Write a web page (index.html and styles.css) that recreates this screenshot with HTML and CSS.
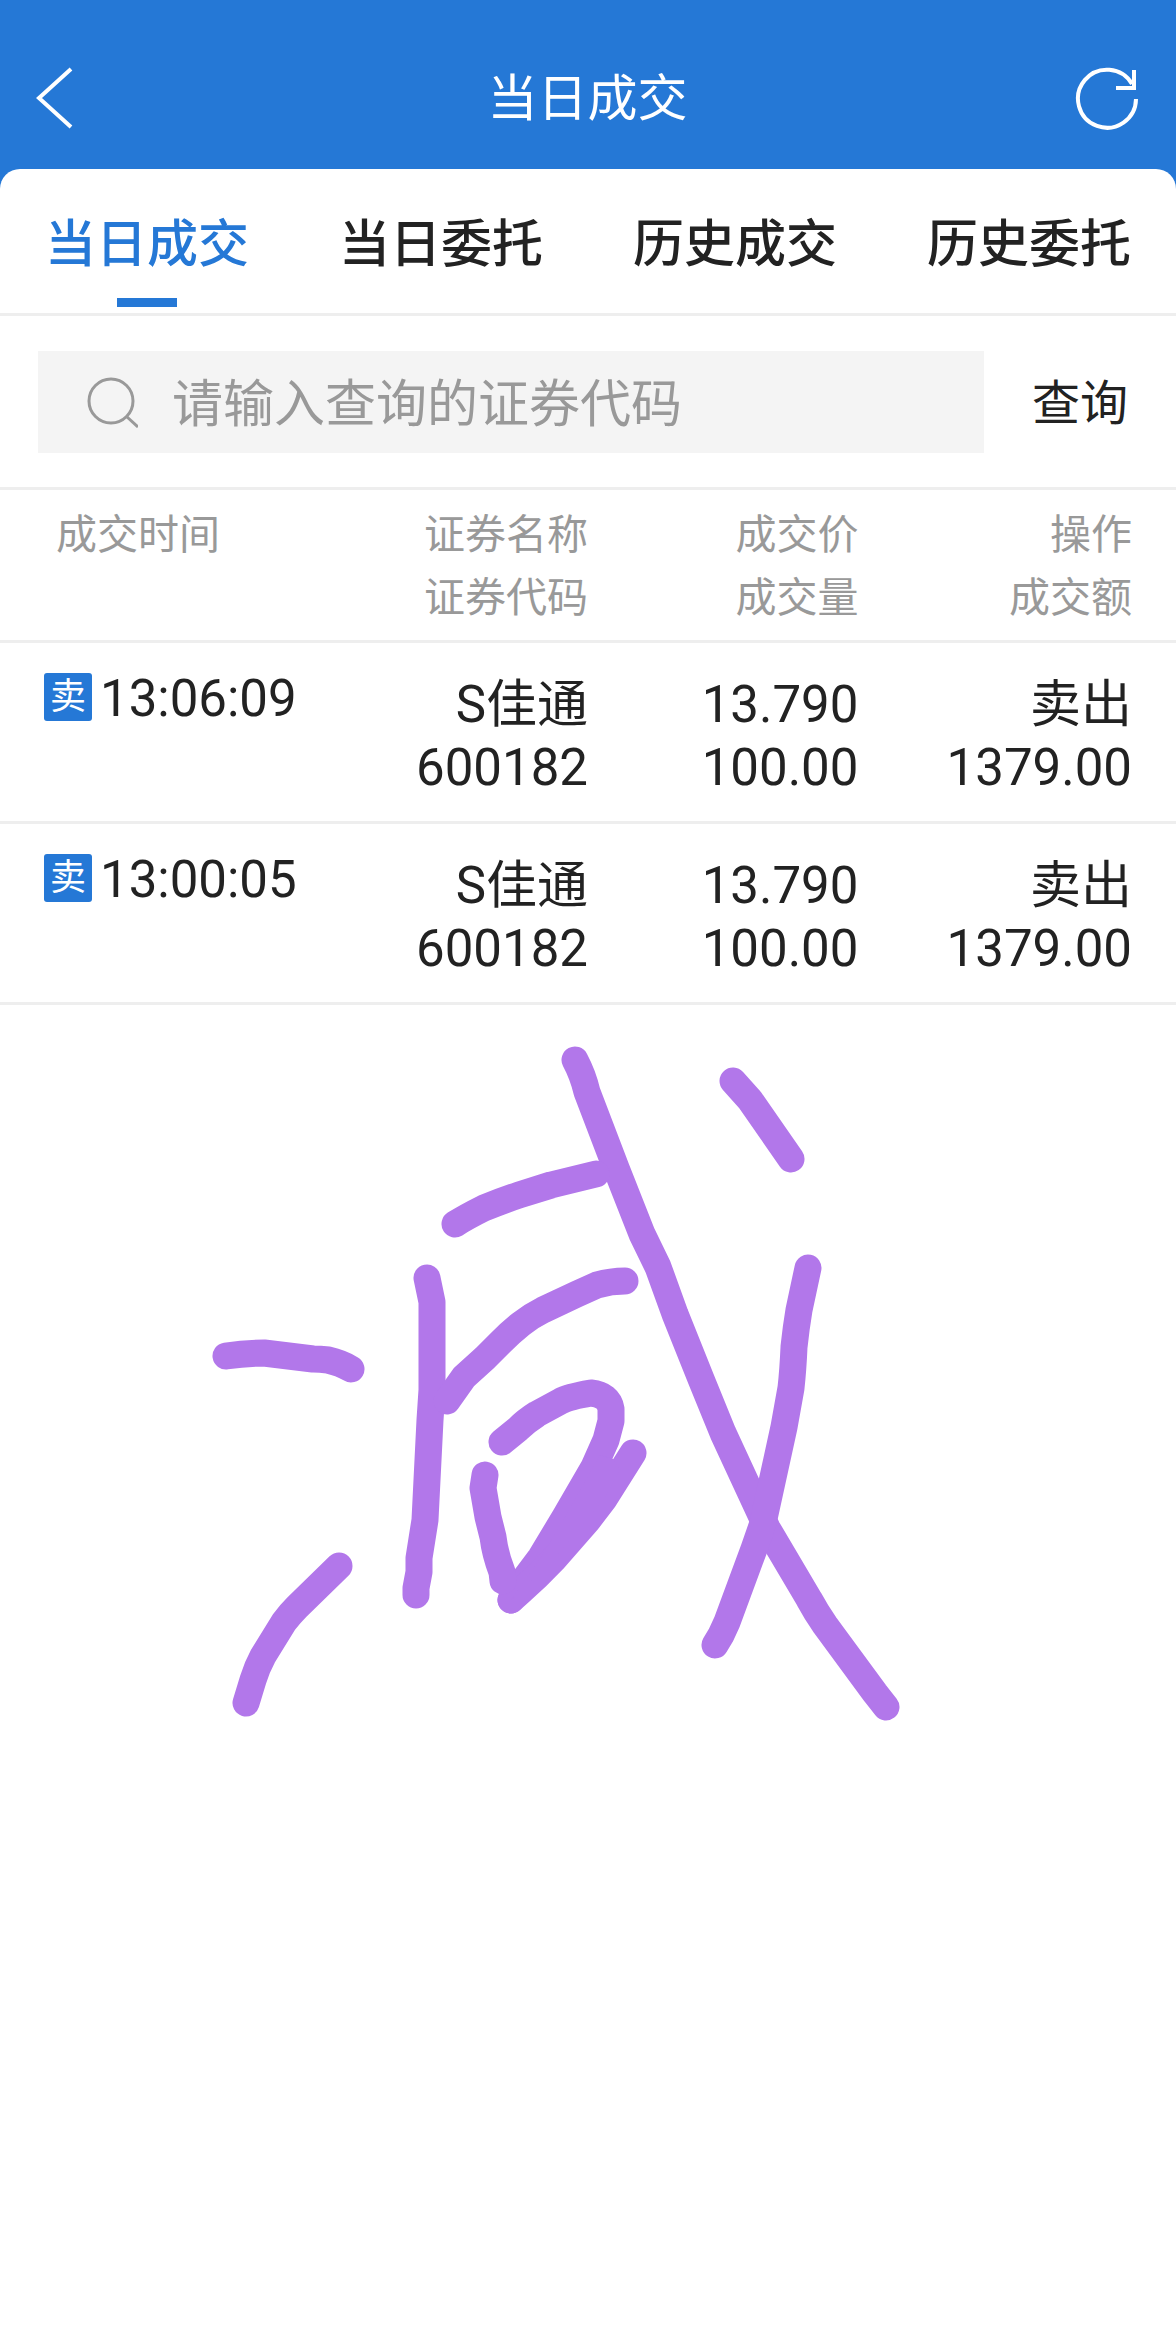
FILE: index.html
```html
<!DOCTYPE html>
<html lang="zh-CN">
<head>
  <meta charset="utf-8">
  <meta name="viewport" content="width=device-width, initial-scale=1">
  <title>当日成交</title>
  <link rel="stylesheet" href="styles.css">
</head>
<body>
  <div class="app">
    <header class="topbar">
      <button class="icon-button" type="button" aria-label="返回">
        <svg width="38" height="64" viewBox="0 0 38 64" fill="none" stroke="currentColor" stroke-width="4"><path d="M35 3 3 32l32 29"/></svg>
      </button>
      <h1 class="title">当日成交</h1>
      <button class="icon-button icon-button-end" type="button" aria-label="刷新">
        <svg width="64" height="64" viewBox="0 0 64 64" fill="none" stroke="currentColor" stroke-width="4"><path d="M61 33A29 29 0 1 1 57 18"/><path d="M59 4v18H41"/></svg>
      </button>
    </header>

    <main class="sheet">
      <nav class="tabs">
        <a class="tab tab-active" href="#today-deals" aria-current="page">当日成交</a>
        <a class="tab" href="#today-orders">当日委托</a>
        <a class="tab" href="#past-deals">历史成交</a>
        <a class="tab" href="#past-orders">历史委托</a>
      </nav>

      <form class="search">
        <label class="search-box">
          <svg class="search-icon" width="52" height="52" viewBox="0 0 52 52" fill="none" stroke="currentColor" stroke-width="3"><circle cx="25" cy="25" r="22"/><path d="m40 40 12 11"/></svg>
          <input class="search-input" type="text" placeholder="请输入查询的证券代码" aria-label="证券代码">
        </label>
        <button class="search-button" type="submit">查询</button>
      </form>

      <table class="deals">
        <colgroup>
          <col class="col-time">
          <col class="col-name">
          <col class="col-price">
          <col class="col-action">
        </colgroup>
        <thead>
          <tr>
            <th scope="col"><span>成交时间</span></th>
            <th scope="col"><span>证券名称</span><span>证券代码</span></th>
            <th scope="col"><span>成交价</span><span>成交量</span></th>
            <th scope="col"><span>操作</span><span>成交额</span></th>
          </tr>
        </thead>
        <tbody>
          <tr>
            <td><div class="time"><b class="tag">卖</b>13:06:09</div></td>
            <td><span>S佳通</span><span>600182</span></td>
            <td><span>13.790</span><span>100.00</span></td>
            <td><span>卖出</span><span>1379.00</span></td>
          </tr>
          <tr>
            <td><div class="time"><b class="tag">卖</b>13:00:05</div></td>
            <td><span>S佳通</span><span>600182</span></td>
            <td><span>13.790</span><span>100.00</span></td>
            <td><span>卖出</span><span>1379.00</span></td>
          </tr>
        </tbody>
      </table>

      <svg class="doodle" viewBox="0 1005 1176 1321" role="img" aria-label="手写标注">
        <path d="M575 1060Q583 1075 587 1092L616 1168 642 1234 658 1267 675 1314 701 1379 723 1433 767 1528 809 1599Q816 1612 825 1625L875 1693 886 1707"/>
        <path d="M733 1081 750 1100 791 1159"/>
        <path d="M455 1224Q466 1217 484 1208 501 1201 519 1195L551 1185 596 1174"/>
        <path d="M427 1278 432 1302V1390L430 1420 425 1520 419 1558V1572L416 1588V1595"/>
        <path d="M625 1281Q611 1281 597 1285L577 1294 543 1310Q531 1316 521 1324 511 1332 501 1342L485 1358 464 1377 447 1401"/>
        <path d="M226 1356Q245 1353 264 1353L313 1359Q320 1359 328 1360 341 1363 351 1369"/>
        <path d="M339 1566 297 1607Q290 1614 284 1622L263 1656Q257 1667 253 1680L246 1703"/>
        <path d="M502 1442 518 1429Q526 1421 537 1414L561 1401Q568 1397 591 1393 609 1395 611 1409V1421L606 1440 594 1467 565 1517 541 1557 526 1577 511 1600"/>
        <path d="M633 1453 604 1499 588 1520 553 1560Q537 1577 520 1592L511 1600"/>
        <path class="doodle-fill" d="M600 1455 613 1459 620 1470 604 1499 553 1560 511 1600 541 1557 565 1517Z"/>
        <path d="M485 1475 483 1488 488 1517 493 1537Q495 1554 502 1572L503 1581"/>
        <path d="M808 1268 799 1310Q796 1328 794 1347 793 1370 791 1388L784 1427 763 1523 754 1549 727 1622 721 1635 715 1645"/>
      </svg>
    </main>
  </div>
</body>
</html>
```
FILE: styles.css
```css
:root {
  --blue: #2578d6;
  --ink: #222;
  --muted: #999;
  --line: #eee;
  --pen: #b277ea;
}

* {
  box-sizing: border-box;
}

body {
  margin: 0;
  color: var(--ink);
  font-family: Roboto, "Noto Sans CJK SC", sans-serif;
  background: #fff;
}

button,
input {
  margin: 0;
  padding: 0;
  border: 0;
  background: none;
  color: inherit;
  font-family: inherit;
}

svg {
  display: block;
}

.app {
  background: var(--blue);
}

/* Title bar */
.topbar {
  display: grid;
  grid-template-columns: 1fr auto 1fr;
  align-items: center;
  padding: 58px 37px 32px 36px;
  color: #fff;
}

.icon-button {
  justify-self: start;
}

.icon-button-end {
  justify-self: end;
}

.title {
  margin: 0;
  padding-top: 4px;
  font-size: 50px;
  font-weight: 400;
  line-height: 75px;
}

.sheet {
  border-radius: 20px 20px 0 0;
  background: #fff;
}

/* Tabs */
.tabs {
  display: grid;
  grid-template-columns: repeat(4, 1fr);
  border-bottom: 3px solid var(--line);
}

.tab {
  display: flex;
  flex-direction: column;
  align-items: center;
  padding: 38px 0 6px;
  color: var(--ink);
  font-size: 51px;
  font-weight: 500;
  line-height: 75px;
  text-decoration: none;
}

.tab::after {
  width: 60px;
  height: 9px;
  margin-top: 16px;
  content: "";
}

.tab-active {
  color: var(--blue);
}

.tab-active::after {
  background: var(--blue);
}

/* Search */
.search {
  display: flex;
  align-items: center;
  gap: 48px;
  padding: 35px 48px 34px 38px;
  border-bottom: 3px solid var(--line);
}

.search-box {
  display: flex;
  flex: 1;
  align-items: center;
  gap: 34px;
  height: 102px;
  padding: 0 48px;
  background: #f4f4f4;
  color: var(--muted);
}

.search-input {
  flex: 1;
  min-width: 0;
  height: 80px;
  padding-top: 4px;
  outline: 0;
  color: var(--ink);
  font-size: 51px;
}

.search-input::placeholder {
  color: var(--muted);
  opacity: 1;
}

.search-button {
  padding-top: 2px;
  font-size: 48px;
  line-height: 75px;
}

/* Deals */
.deals {
  width: 100%;
  border-spacing: 0;
  table-layout: fixed;
}

.col-time {
  width: 30%;
}

.col-name {
  width: 20%;
}

.col-price {
  width: 23%;
}

.col-action {
  width: 27%;
}

.deals th,
.deals td {
  border-bottom: 3px solid var(--line);
  line-height: 63px;
  text-align: right;
  vertical-align: top;
}

.deals th {
  padding: 14px 0 10px;
  color: var(--muted);
  font-size: 41px;
  font-weight: 400;
}

.deals td {
  padding: 30px 0 22px;
  font-size: 51px;
}

.deals th:first-child {
  padding-left: 56px;
  text-align: left;
}

.deals td:first-child {
  padding-left: 44px;
}

.deals th:last-child,
.deals td:last-child {
  padding-right: 44px;
}

.deals span {
  display: block;
}

.time {
  display: flex;
  align-items: flex-start;
  gap: 8px;
  line-height: 52px;
}

.tag {
  width: 48px;
  height: 48px;
  border-radius: 3px;
  background: var(--blue);
  color: #fff;
  font-size: 36px;
  font-weight: 400;
  line-height: 48px;
  text-align: center;
}

/* Handwritten mark */
.doodle {
  width: 100%;
  fill: none;
  stroke: var(--pen);
  stroke-width: 27px;
  stroke-linecap: round;
  stroke-linejoin: round;
}

.doodle-fill {
  fill: var(--pen);
  stroke: none;
}
```
